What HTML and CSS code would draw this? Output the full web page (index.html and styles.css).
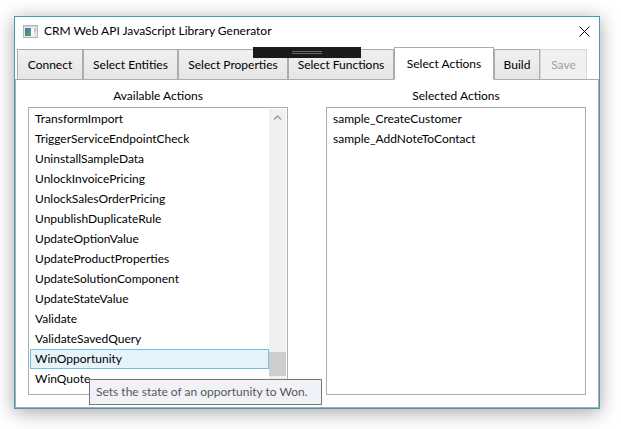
FILE: index.html
```html
<!DOCTYPE html>
<html lang="en">
<head>
<meta charset="utf-8">
<title>CRM Web API JavaScript Library Generator</title>
<link rel="stylesheet" href="styles.css">
</head>
<body>
<main class="window">
  <header class="titlebar">
    <svg class="app-icon" width="15" height="13" viewBox="0 0 15 13" aria-hidden="true">
      <defs>
        <linearGradient id="scene" x1="0" y1="0" x2="1" y2="1">
          <stop offset="0" stop-color="#4377a5"/>
          <stop offset="1" stop-color="#58a36c"/>
        </linearGradient>
      </defs>
      <rect x="0.5" y="0.5" width="14" height="12" fill="#e4e7eb" stroke="#b2b5b9"/>
      <path d="M1 1.5h13" stroke="#d2d5da"/>
      <rect x="2" y="3" width="6" height="8" fill="url(#scene)"/>
      <rect x="8" y="3" width="3" height="8" fill="#f5f7f9"/>
      <rect x="11" y="3" width="2" height="4" fill="#b6d5bf"/>
      <rect x="11" y="7" width="2" height="4" fill="#dce3e9"/>
    </svg>
    <h1 class="title">CRM Web API JavaScript Library Generator</h1>
    <button class="close" type="button" aria-label="Close">
      <svg width="11" height="11" viewBox="0 0 11 11" aria-hidden="true"><path d="M0.5 0.5l10 10M10.5 0.5l-10 10" stroke="#000" fill="none"/></svg>
    </button>
  </header>
  <nav class="tabs" role="tablist">
    <button class="tab" type="button" role="tab">Connect</button>
    <button class="tab" type="button" role="tab">Select Entities</button>
    <button class="tab" type="button" role="tab">Select Properties</button>
    <button class="tab" type="button" role="tab">Select Functions</button>
    <button class="tab tab-active" type="button" role="tab" aria-selected="true">Select Actions</button>
    <button class="tab" type="button" role="tab">Build</button>
    <button class="tab" type="button" role="tab" disabled>Save</button>
  </nav>
  <section class="panel">
    <div class="column">
      <h2 class="label" id="available">Available Actions</h2>
      <div class="listbox">
        <ul class="items" role="listbox" aria-labelledby="available">
          <li class="item" role="option">TransformImport</li>
          <li class="item" role="option">TriggerServiceEndpointCheck</li>
          <li class="item" role="option">UninstallSampleData</li>
          <li class="item" role="option">UnlockInvoicePricing</li>
          <li class="item" role="option">UnlockSalesOrderPricing</li>
          <li class="item" role="option">UnpublishDuplicateRule</li>
          <li class="item" role="option">UpdateOptionValue</li>
          <li class="item" role="option">UpdateProductProperties</li>
          <li class="item" role="option">UpdateSolutionComponent</li>
          <li class="item" role="option">UpdateStateValue</li>
          <li class="item" role="option">Validate</li>
          <li class="item" role="option">ValidateSavedQuery</li>
          <li class="item item-hover" role="option">WinOpportunity<span class="tooltip" role="tooltip">Sets the state of an opportunity to Won.</span></li>
          <li class="item" role="option">WinQuote</li>
        </ul>
        <div class="scrollbar" aria-hidden="true">
          <svg class="arrow" width="9" height="7" viewBox="0 0 9 7"><path d="M1 5.5l3.500-3.500 3.500 3.500" fill="none" stroke="#9a9a9a" stroke-width="1.500"/></svg>
          <div class="thumb"></div>
        </div>
      </div>
    </div>
    <div class="column">
      <h2 class="label" id="selected">Selected Actions</h2>
      <div class="listbox">
        <ul class="items" role="listbox" aria-labelledby="selected">
          <li class="item" role="option">sample_CreateCustomer</li>
          <li class="item" role="option">sample_AddNoteToContact</li>
        </ul>
      </div>
    </div>
  </section>
  <div class="grip" aria-hidden="true"></div>
</main>
</body>
</html>
```
FILE: styles.css
```css
* {
  box-sizing: border-box;
}

body {
  display: flex;
  height: 100vh;
  margin: 0;
  padding: 16px 21px 20px 14px;
  background: #fff;
  color: #000;
  font: 12px/16px Lato, "Open Sans", sans-serif;
}

button {
  font: inherit;
  color: inherit;
}

.window {
  position: relative;
  flex: 1;
  display: flex;
  flex-direction: column;
  border: 1px solid #429ab9;
  background: #fff;
  box-shadow: 0 3px 18px rgba(0, 0, 0, 0.36);
}

.titlebar {
  display: flex;
  align-items: center;
  height: 30px;
  padding: 0 9px 2px 8px;
}

.title {
  flex: 1;
  margin: 0 0 0 6px;
  font-size: 12px;
  font-weight: 400;
}

.close {
  display: flex;
  padding: 0;
  border: 0;
  background: none;
}

.tabs {
  display: grid;
  grid-template-columns: 66px 95px 110px 106px 100px 46px 47px;
  align-items: end;
  height: 33px;
  padding-left: 2px;
}

.tab {
  height: 31px;
  padding: 0;
  border: 1px solid #acacac;
  background: linear-gradient(#f0f0f0, #e5e5e5);
  white-space: nowrap;
}

.tab:disabled {
  border-color: #d9d9d9 #d9d9d9 #acacac;
  background: #f0f0f0;
  color: #a0a0a0;
}

.tab-active {
  z-index: 1;
  height: 33px;
  border-bottom-color: #fff;
  background: #fff;
}

.panel {
  flex: 1;
  display: flex;
  gap: 38px;
  margin-top: -1px;
  padding: 8px 12px 12px;
  border: 1px solid #acacac;
}

.column {
  flex: 1;
  display: flex;
  flex-direction: column;
}

.label {
  margin: 0 0 3px;
  font-size: 12px;
  font-weight: 400;
  text-align: center;
}

.listbox {
  flex: 1;
  display: flex;
  padding: 1px;
  border: 1px solid #abadb3;
}

.items {
  flex: 1;
  margin: 0;
  padding: 0;
  list-style: none;
}

.item {
  position: relative;
  height: 20px;
  padding: 1px 4px;
  border: 1px solid transparent;
}

.item-hover {
  border-color: #70c0e7;
  background: #e5f3fb;
}

.tooltip {
  position: absolute;
  z-index: 2;
  top: 29px;
  left: 58px;
  padding: 4px 13px 4px 6px;
  border: 1px solid #767676;
  background: #f1f2f7;
  color: #575757;
  white-space: nowrap;
}

.scrollbar {
  display: flex;
  flex-direction: column;
  align-items: center;
  justify-content: space-between;
  width: 17px;
  padding: 5px 0 17px;
  background: #f0f0f0;
}

.thumb {
  width: 17px;
  height: 24px;
  background: #cdcdcd;
}

.grip {
  position: absolute;
  z-index: 3;
  top: 30px;
  left: 50%;
  width: 108px;
  height: 11px;
  transform: translateX(-50%);
  background: #1b1b1b;
}

.grip::after {
  content: "";
  display: block;
  width: 30px;
  height: 1px;
  margin: 4px auto;
  border: solid #686868;
  border-width: 1px 0;
}
```
